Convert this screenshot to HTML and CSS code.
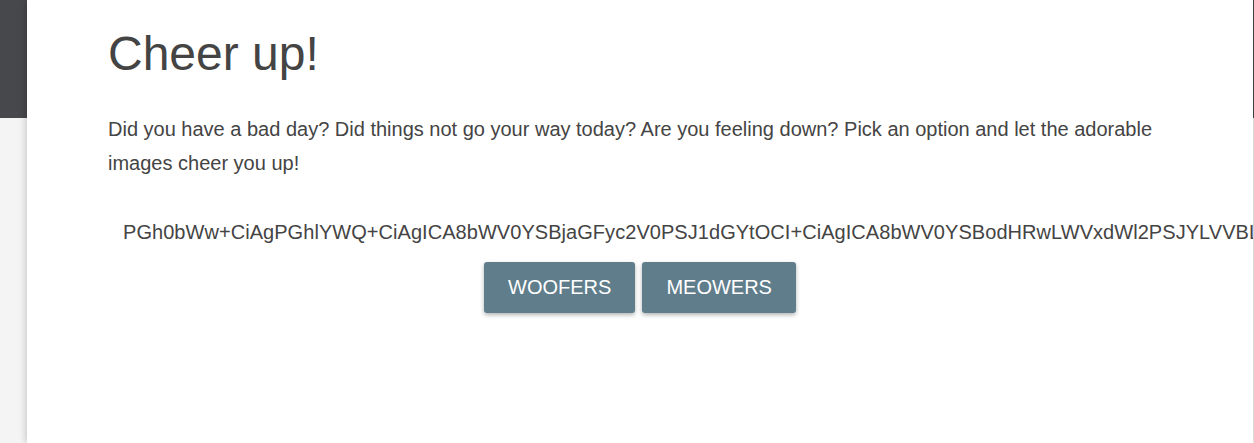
FILE: index.html
```html
<!DOCTYPE html>
<html lang="en">
<head>
<meta charset="utf-8">
<title>Cheer up!</title>
<link rel="stylesheet" href="styles.css">
</head>
<body>
  <div class="backdrop"><div class="band"></div></div>
  <main class="card">
    <h1 class="title">Cheer up!</h1>
    <p class="intro">Did you have a bad day? Did things not go your way today? Are you feeling down? Pick an option and let the adorable images cheer you up!</p>
    <div class="encoded">PGh0bWw+CiAgPGhlYWQ+CiAgICA8bWV0YSBjaGFyc2V0PSJ1dGYtOCI+CiAgICA8bWV0YSBodHRwLWVxdWl2PSJYLVVBLUNvbXBhdGlibGUiIGNvbnRlbnQ9IklFPWVkZ2UiPgo=</div>
    <div class="actions">
      <button class="btn" type="button">Woofers</button>
      <button class="btn" type="button">Meowers</button>
    </div>
  </main>
</body>
</html>
```
FILE: styles.css
```css
html, body {
  margin: 0;
  padding: 0;
  height: 100%;
}
body {
  background: #f4f4f4;
  font-family: "Liberation Sans", Arial, sans-serif;
  color: #444;
  overflow: hidden;
  position: relative;
}
.backdrop {
  position: absolute;
  inset: 0;
  z-index: 0;
}
.band {
  height: 118px;
  background: #47484c;
}
.card {
  position: relative;
  z-index: 1;
  margin-left: 27px;
  width: 1226px;
  min-height: 100%;
  box-sizing: border-box;
  background: #fff;
  padding: 1px 81px 0 81px;
  overflow: hidden;
  box-shadow: 0 0 8px rgba(0, 0, 0, 0.25);
}
.title {
  font-size: 48px;
  font-weight: 400;
  margin: 27px 0 0 0;
  line-height: 1.1;
  color: #444;
}
.intro {
  font-size: 20px;
  line-height: 34px;
  margin: 31px 0 0 0;
}
.encoded {
  font-size: 20px;
  letter-spacing: 0.05px;
  white-space: nowrap;
  padding-left: 15px;
  margin-top: 40px;
  line-height: 24px;
}
.actions {
  display: flex;
  justify-content: center;
  gap: 7px;
  margin-top: 18px;
}
.btn {
  font-family: "Liberation Sans", Arial, sans-serif;
  font-size: 20px;
  text-transform: uppercase;
  color: #fff;
  background: #607d8b;
  border: none;
  border-radius: 3px;
  height: 51px;
  padding: 0 24px;
  box-shadow: 0 2px 4px rgba(0, 0, 0, 0.3);
}
```
